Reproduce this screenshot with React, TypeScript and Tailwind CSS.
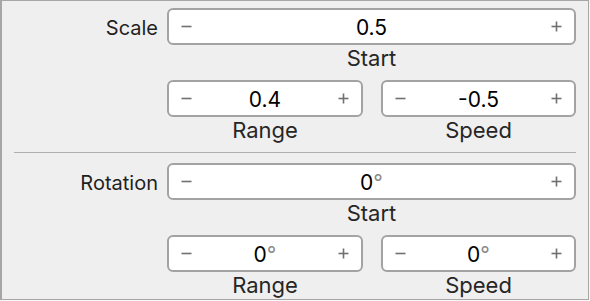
import React from "react";

const font = { fontFamily: "Inter, 'Helvetica Neue', Arial, sans-serif" };

function Minus() {
  return (
    <svg width="11" height="11" viewBox="0 0 11 11" className="shrink-0">
      <line x1="0.5" y1="5.5" x2="10.5" y2="5.5" stroke="#707070" strokeWidth="1.6" />
    </svg>
  );
}

function Plus() {
  return (
    <svg width="11" height="11" viewBox="0 0 11 11" className="shrink-0">
      <line x1="0.5" y1="5.5" x2="10.5" y2="5.5" stroke="#707070" strokeWidth="1.6" />
      <line x1="5.5" y1="0.5" x2="5.5" y2="10.5" stroke="#707070" strokeWidth="1.6" />
    </svg>
  );
}

function Stepper({ value, degree, width }: { value: string; degree?: boolean; width: string }) {
  return (
    <div className={`flex h-[37px] items-center rounded-[6px] border-2 border-[#a3a3a3] bg-white px-[12px] ${width}`}>
      <Minus />
      <div className="flex-1 pt-[1px] text-center text-[21px] leading-[33px] text-black">
        {value}
        {degree && <span className="text-[#8a8a8a]">°</span>}
      </div>
      <Plus />
    </div>
  );
}

function Caption({ children, width }: { children: React.ReactNode; width: string }) {
  return (
    <div className={`h-[24px] text-center text-[22px] leading-[27px] text-[#262626] ${width}`}>{children}</div>
  );
}

function Section({ label, start, range, speed, degree }: { label: string; start: string; range: string; speed: string; degree?: boolean }) {
  return (
    <div className="flex flex-col">
      <div className="flex items-center">
        <div className="w-[156px] pt-[2px] text-right text-[20px] leading-[24px] text-[#1f1f1f]">{label}</div>
        <div className="ml-[9px]">
          <Stepper value={start} degree={degree} width="w-[409px]" />
        </div>
      </div>
      <div className="ml-[165px]">
        <Caption width="w-[409px]">Start</Caption>
      </div>
      <div className="ml-[165px] mt-[11px] flex gap-[18px]">
        <div className="flex flex-col">
          <Stepper value={range} degree={degree} width="w-[196px]" />
          <Caption width="w-[196px]">Range</Caption>
        </div>
        <div className="flex flex-col">
          <Stepper value={speed} degree={degree} width="w-[195px]" />
          <Caption width="w-[195px]">Speed</Caption>
        </div>
      </div>
    </div>
  );
}

export default function App() {
  return (
    <div className="h-[301px] w-[590px] bg-[#f7f7f7]" style={font}>
      <div className="flex h-[300px] w-[589px] flex-col border border-l-2 border-[#a6a6a6] bg-[#efefef] pt-[7px]">
        <Section label="Scale" start="0.5" range="0.4" speed="-0.5" />
        <div className="ml-[12px] mt-[11px] h-[1px] w-[562px] bg-[#b0b0b0]" />
        <div className="mt-[10px]">
          <Section label="Rotation" start="0" range="0" speed="0" degree />
        </div>
      </div>
    </div>
  );
}
